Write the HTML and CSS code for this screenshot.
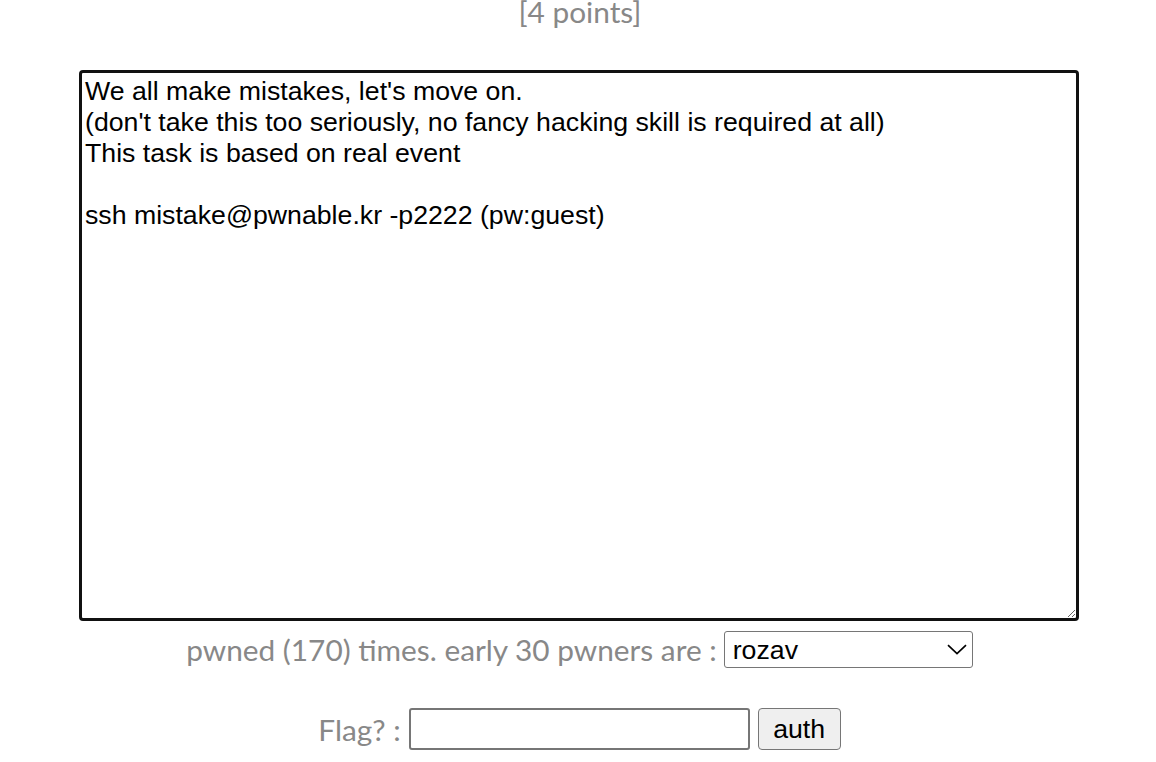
FILE: index.html
```html
<!DOCTYPE html>
<html>
<head>
<meta charset="utf-8">
<link rel="stylesheet" href="styles.css">
</head>
<body>
<div class="page">
  <div class="points">[4 points]</div>
  <textarea class="desc" readonly>We all make mistakes, let's move on.
(don't take this too seriously, no fancy hacking skill is required at all)
This task is based on real event

ssh mistake@pwnable.kr -p2222 (pw:guest)</textarea>
  <div class="pwned-row">
    <span class="label">pwned (170) times. early 30 pwners are :</span>
    <span class="select-wrap">
      <select class="pwners"><option>rozav</option></select>
      <svg class="chevron" width="20" height="11" viewBox="0 0 20 11"><path d="M1 1.2 L10 9.5 L19 1.2" fill="none" stroke="#000" stroke-width="1.7"/></svg>
    </span>
  </div>
  <form class="flag-row" onsubmit="return false">
    <span class="label">Flag? :</span>
    <input class="flag-input" type="text">
    <button class="auth" type="button">auth</button>
  </form>
</div>
</body>
</html>
```
FILE: styles.css
```css
html, body {
  margin: 0;
  padding: 0;
  background: #fff;
}
.page {
  display: flex;
  flex-direction: column;
  align-items: center;
  width: 1156px;
}
.points {
  font-family: Lato, "Open Sans", sans-serif;
  font-size: 29.8px;
  line-height: 30px;
  color: #888;
  margin-top: -3px;
  margin-left: 4px;
}
.desc {
  display: block;
  box-sizing: border-box;
  width: 1000px;
  height: 551px;
  margin-top: 43px;
  margin-left: 2px;
  border: 3px solid #111;
  border-radius: 4px;
  padding: 3px 3px;
  font-family: "Liberation Sans", Arial, sans-serif;
  font-size: 26.7px;
  line-height: 31px;
  color: #000;
  resize: both;
  outline: none;
}
.label {
  font-family: Lato, "Open Sans", sans-serif;
  font-size: 29.8px;
  color: #888;
}
.pwned-row {
  display: flex;
  align-items: center;
  gap: 7px;
  margin-top: 10px;
  margin-left: 3px;
}
.select-wrap {
  position: relative;
  display: block;
}
.pwners {
  display: block;
  box-sizing: border-box;
  width: 249px;
  height: 37px;
  border: 1px solid #767676;
  border-radius: 3px;
  background: #fff;
  font-family: "Liberation Sans", Arial, sans-serif;
  font-size: 26.7px;
  color: #000;
  padding: 0 8px;
  appearance: none;
  -webkit-appearance: none;
}
.chevron {
  position: absolute;
  right: 6px;
  top: 13px;
  pointer-events: none;
}
.flag-row {
  display: flex;
  align-items: center;
  gap: 8px;
  margin: 40px 0 0 3px;
}
.flag-input {
  box-sizing: border-box;
  width: 341px;
  height: 42px;
  border: 2px solid #767676;
  border-radius: 3px;
  font-size: 24px;
}
.auth {
  box-sizing: border-box;
  width: 83px;
  height: 42px;
  border: 1.5px solid #767676;
  border-radius: 4px;
  background: #efefef;
  font-family: "Liberation Sans", Arial, sans-serif;
  font-size: 26.7px;
  color: #000;
  padding: 0;
}
```
